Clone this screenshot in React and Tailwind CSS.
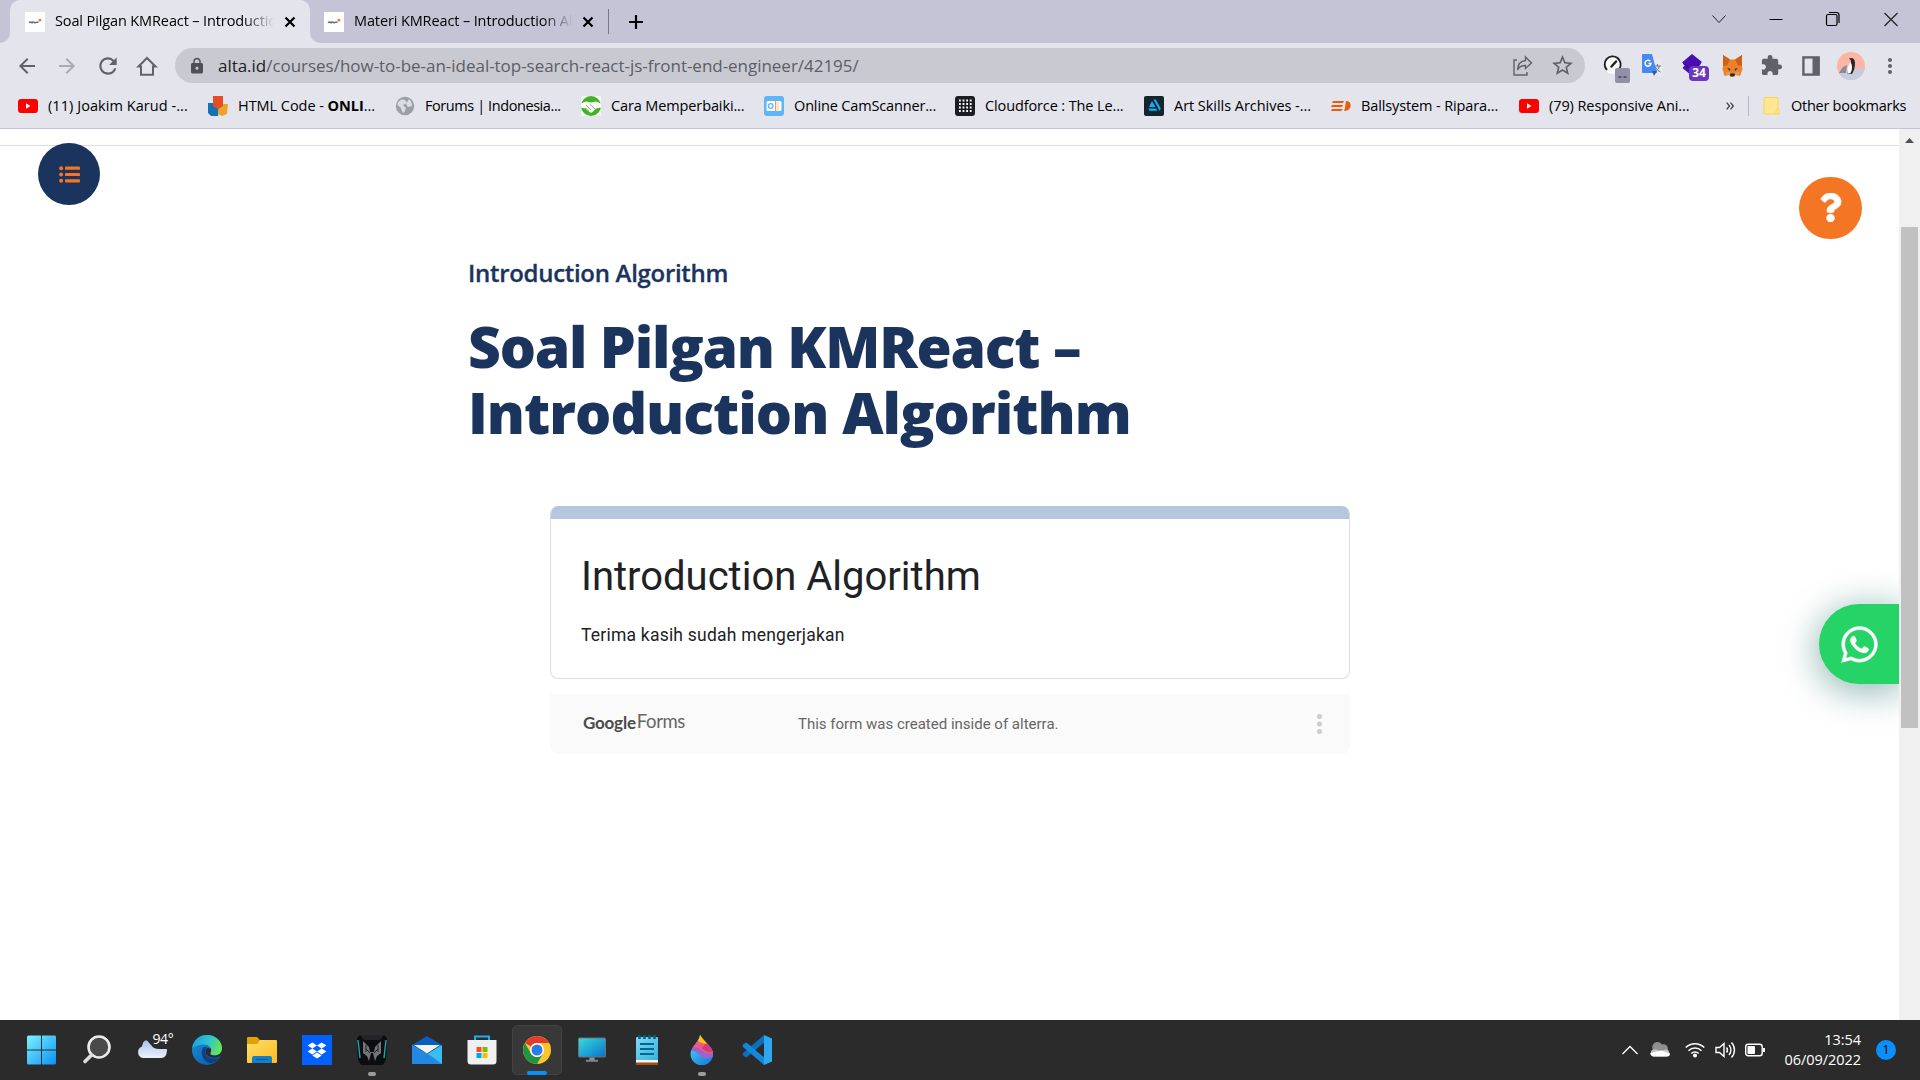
import React from "react";
import { FaQuestion, FaWhatsapp } from "react-icons/fa";
import { MdArrowBack, MdArrowForward, MdRefresh, MdLock, MdStarBorder, MdExtension, MdMoreVert } from "react-icons/md";

const CHROME_FONT = "font-['Open_Sans','Noto_Sans',sans-serif]";

function Favicon() {
  return (
    <svg className="h-5 w-5 shrink-0" viewBox="0 0 20 20">
      <rect width="20" height="20" fill="#fff" />
      <path d="M4 10.800c1.200-1.200 2.200-.7 3 0 .8-1.200 2-.7 3 0 1-.9 1.800-.6 3.500-.6" stroke="#5b6f90" strokeWidth="1.500" fill="none" />
      <circle cx="14.900" cy="8.200" r="1.400" fill="#f47523" />
    </svg>
  );
}

function CloseX({ className }) {
  return (
    <svg className={className} viewBox="0 0 12 12">
      <path d="M1.500 1.500l9 9M10.500 1.500l-9 9" stroke="#000" strokeWidth="2.200" />
    </svg>
  );
}

function TabTitle({ children }) {
  return (
    <span className="mb-[2px] ml-[10px] w-[219px] overflow-hidden whitespace-nowrap text-[14.5px] tracking-[-0.12px] [mask-image:linear-gradient(to_right,#000_86%,transparent)]">{children}</span>
  );
}

function TabStrip() {
  return (
    <div className="flex h-[43px] shrink-0 items-stretch bg-[#c4c4d6] text-black">
      <div className="w-[10px] bg-[#e3e4ec]"><div className="h-full rounded-br-[10px] bg-[#c4c4d6]" /></div>
      <div className="flex w-[300px] items-center rounded-t-[10px] bg-[#e3e4ec] pl-[15px]">
        <Favicon />
        <TabTitle>Soal Pilgan KMReact – Introduction Algorithm</TabTitle>
        <CloseX className="ml-[10px] h-3 w-3" />
      </div>
      <div className="flex flex-1 bg-[#e3e4ec]">
        <div className="flex flex-1 items-center rounded-bl-[10px] bg-[#c4c4d6] pl-[14px]">
          <Favicon />
          <TabTitle>Materi KMReact – Introduction Algorithm</TabTitle>
          <CloseX className="ml-[9px] h-3 w-3" />
          <div className="ml-[14px] h-[25px] w-px bg-[#77778a]" />
          <svg className="ml-[19px] h-4 w-4" viewBox="0 0 16 16"><path d="M8 1v14M1 8h14" stroke="#000" strokeWidth="2.200" /></svg>
          <svg className="mb-[6px] ml-auto h-4 w-4" viewBox="0 0 16 16"><path d="M1.500 4.500L8 11.500l6.500-7" stroke="#222" fill="none" /></svg>
          <svg className="mb-[6px] ml-[41px] h-4 w-4" viewBox="0 0 16 16"><path d="M1.500 8.500h13" stroke="#000" /></svg>
          <svg className="mb-[6px] ml-[41px] h-4 w-4" viewBox="0 0 16 16" fill="none" stroke="#000" strokeWidth="1.200"><rect x="1.500" y="3.500" width="10.500" height="11" rx="1.500" /><path d="M4 1.500h7.500a2.500 2.500 0 0 1 2.500 2.500v8" /></svg>
          <svg className="mb-[6px] ml-[42px] mr-[21px] h-4 w-4" viewBox="0 0 16 16"><path d="M1.500 2l13 13M14.500 2l-13 13" stroke="#222" strokeWidth="1.200" /></svg>
        </div>
      </div>
    </div>
  );
}

function Extensions() {
  return (
    <div className="flex h-9 items-center">
      <svg className="ml-[17px] h-9 w-[28px]" viewBox="0 0 28 36">
        <circle cx="10.500" cy="17" r="9" fill="#fafafa" />
        <path d="M5 22a8 8 0 1 1 12.500-1.500" fill="none" stroke="#202124" strokeWidth="1.900" />
        <path d="M9.500 18.500l4.500-5" stroke="#202124" strokeWidth="2.400" strokeLinecap="round" />
        <rect x="13" y="20" width="15" height="15" rx="2" fill="#9090a8" />
        <path d="M16.500 29h3M21.500 29h3" stroke="#222" strokeWidth="1.200" />
      </svg>
      <svg className="ml-[11px] h-6 w-[22px]" viewBox="0 0 22 24">
        <rect x="8" y="5" width="13" height="17" fill="#e8e9ec" />
        <path d="M13 12h7M16.500 10v2M18.500 12c-.8 3-3 5-5 6M14.500 13c1 2.500 3 4 5 5" stroke="#5b7897" fill="none" />
        <path d="M2 0h9l5 19H2a1 1 0 0 1-1-1V1a1 1 0 0 1 1-1z" fill="#4688f4" /><path d="M11 17h5l-3 5z" fill="#3850b5" />
        <path d="M9.300 7.200A3 3 0 1 0 10 9.500H7.500" fill="none" stroke="#fff" strokeWidth="1.500" />
      </svg>
      <div className="relative ml-[18px] h-9 w-[28px]">
        <svg className="h-9 w-7" viewBox="0 0 28 36"><path d="M11 6l10 8-3 3 3 3v2L11 28 1.500 20 4 17l-3-2.500z" fill="#4a0db3" /><path d="M2 15.500l9 6.500 9-6.500" fill="none" stroke="#35057f" /></svg>
        <span className="absolute right-0 top-[18px] flex h-[15px] w-[20px] items-center justify-center rounded-sm bg-[#6c36bd] text-[12px] font-bold leading-none text-white">34</span>
      </div>
      <svg className="ml-[13px] h-6 w-[21px]" viewBox="0 0 21 24">
        <path d="M1 1l7 4.500h5L20 1l-.5 9 1 5-2.500 7-5-1-2 2h-2l-2-2-4.500 1-2-7 1-5z" fill="#ee8127" />
        <path d="M1 1l7 4.500-3 6-4 .5zM20 1l-7 4.500 3 6 4 .5z" fill="#cd6116" />
        <path d="M5 14l3.500.7-.7 2.300zM16 14l-3.500.7.7 2.300z" fill="#263b4e" /><path d="M8.300 19.500h4.400v2.800H8.300z" fill="#282828" />
        <path d="M4 18.500l3.500-.5.5 2-3.500 1zM17 18.500l-3.500-.5-.5 2 3.500 1z" fill="#d9a27a" />
      </svg>
      <MdExtension className="ml-[17px] h-[23px] w-[23px] text-[#5f6368]" />
      <svg className="ml-[19px] h-[20px] w-[18px]" viewBox="0 0 18 20"><rect x="1.400" y="1.400" width="15.200" height="17.200" fill="none" stroke="#5f6368" strokeWidth="2.400" /><rect x="10.500" y="1" width="7" height="18" fill="#5f6368" /></svg>
      <svg className="ml-[17px] h-7 w-7" viewBox="0 0 28 28">
        <defs><clipPath id="avatar"><circle cx="14" cy="14" r="14" /></clipPath></defs>
        <g clipPath="url(#avatar)">
          <rect width="28" height="28" fill="#fdb5a6" />
          <path d="M0 22l8-2 12-3 8-1v12H0z" fill="#c3cddc" />
          <path d="M2 21c2-3 3-6 6-7l2-1-1 8z" fill="#8d8b93" />
          <path d="M12 6.500c3-1.500 6 0 6 4.500 0 4-1 8-3 11l-5-1c0-5 4-8 4-12.500z" fill="#29272b" />
          <path d="M13.500 10c-2 3-4 7-3 11h3c2-3 2-8 0-11z" fill="#fff" />
        </g>
      </svg>
      <MdMoreVert className="ml-[13px] mr-[14px] h-6 w-6 text-[#5f6368]" />
    </div>
  );
}

function Toolbar() {
  return (
    <div className="flex h-[45px] shrink-0 items-center text-[#5f6368]">
      <MdArrowBack className="ml-[15px] h-6 w-6" />
      <MdArrowForward className="ml-[16px] h-6 w-6 text-[#a9aab2]" />
      <MdRefresh className="ml-[16px] h-[26px] w-[26px]" />
      <svg className="ml-[14px] h-6 w-6" viewBox="0 0 24 24"><path d="M3.500 12.500L12 4l8.500 8.500H18v8.300H6v-8.300z" fill="none" stroke="#5f6368" strokeWidth="2" /></svg>
      <div className="ml-[16px] flex h-[35px] w-[1410px] items-center rounded-full bg-[#c9c9d1] pl-[13px]">
        <MdLock className="h-[18px] w-[18px] text-[#4d5056]" />
        <span className="ml-[12px] text-[17px] tracking-[-0.03px] text-[#5c5e66]"><span className="text-[#202124]">alta.id</span>/courses/how-to-be-an-ideal-top-search-react-js-front-end-engineer/42195/</span>
        <svg className="ml-auto h-[22px] w-[20px]" viewBox="0 0 20 22" fill="none" stroke="#5f6368" strokeWidth="1.400"><path d="M4 5H1v15h13v-3" /><path d="M12.500 2l6 6-6 5.500V10.500c-4 0-6.500 1.500-8 4.500.3-5 3-9 8-9.500z" /></svg>
        <MdStarBorder className="ml-[17px] mr-[10px] h-[25px] w-[25px]" />
      </div>
      <Extensions />
    </div>
  );
}

const YoutubeIcon = () => (
  <svg className="h-5 w-5 shrink-0" viewBox="0 0 20 20"><rect y="3" width="20" height="14" rx="3" fill="#f00" /><path d="M8 7.200v5.600l4.500-2.800z" fill="#fff" /></svg>
);

const bookmarks = [
  { label: "(11) Joakim Karud -...", w: "w-[190px] tracking-[0.06px]", icon: <YoutubeIcon /> },
  { label: <>HTML Code - <b>ONLI</b>...</>, w: "w-[187px] tracking-[-0.05px]", icon: <svg className="h-5 w-5" viewBox="0 0 20 20"><path d="M0 7h9l2 4-1 9H3l-3-3z" fill="#1572b6" /><path d="M11 8h9l-1 10-5 2-4-2z" fill="#eba328" /><path d="M5 0h10v10l-5 3-5-3z" fill="#e44d26" /></svg> },
  { label: "Forums | Indonesia...", w: "w-[186px] tracking-[-0.42px]", icon: <svg className="h-5 w-5" viewBox="0 0 20 20"><circle cx="10" cy="10" r="9.200" fill="#9aa0a6" /><path d="M3 6c3-3 5-3 7-2l2 3-4 2 3 3-2 5c-3-1-2-5-4-6s-3-2-2-5zM14 3c2 2 3 4 3 7l-4 1-2-3z" fill="#dcdde4" /></svg> },
  { label: "Cara Memperbaiki...", w: "w-[183px] tracking-[-0.12px]", icon: <svg className="h-5 w-5" viewBox="0 0 20 20"><rect width="20" height="20" fill="#f4f8f2" /><circle cx="10" cy="10" r="10" fill="#43b02a" /><path d="M0 7.500l5-2 5 1 5-1 5 2v4l-5 1-4 4h-2l-5-4-4-1z" fill="#fff" /><path d="M5 9l5 5M8.500 8l5.500 5M4 12l4 3" stroke="#43b02a" strokeWidth=".8" /></svg> },
  { label: "Online CamScanner...", w: "w-[191px] tracking-[-0.15px]", icon: <svg className="h-5 w-5" viewBox="0 0 20 20"><rect width="20" height="20" rx="3" fill="#5eb5f7" /><rect x="2.500" y="5" width="15" height="10" rx="1.500" fill="#fff" /><circle cx="6.700" cy="10" r="2.300" fill="none" stroke="#5eb5f7" strokeWidth="1.300" /><path d="M11.500 5v10" stroke="#f88" /><path d="M13.700 5v10" stroke="#ffe9b8" strokeWidth="3" /></svg> },
  { label: "Cloudforce : The Le...", w: "w-[189px] tracking-[-0.12px]", icon: <svg className="h-5 w-5" viewBox="0 0 20 20"><rect width="20" height="20" rx="3" fill="#1c1d24" /><path d="M4 4.500h13M4 8h13M4 11.500h13M4 15h13" stroke="#fff" strokeWidth="1.800" strokeDasharray="1.800 1.800" /></svg> },
  { label: "Art Skills Archives -...", w: "w-[187px] tracking-[-0.04px]", icon: <svg className="h-5 w-5" viewBox="0 0 20 20"><rect width="20" height="20" rx="2" fill="#142530" /><path d="M8 5l3.500 6H5zM4.200 12.500h8l1.200 2.200H5.500zM9.500 3.500h2.300l5 9-1.200 2.200z" fill="#13aff0" /></svg> },
  { label: "Ballsystem - Ripara...", w: "w-[188px] tracking-[-0.12px]", icon: <svg className="h-5 w-5" viewBox="0 0 20 20" fill="#ea5b0c"><path d="M2 5h11l-1 2H1zM1 9h11l-1 2H0zM1 13h11l-2 2H0zM15 5c7 0 6 10-2 10l1-3z" /></svg> },
  { label: "(79) Responsive Ani...", w: "w-[204px] tracking-[-0.08px]", icon: <YoutubeIcon /> },
];

function BookmarksBar() {
  return (
    <div className="flex h-[41px] shrink-0 items-center border-b border-[#c4c4d2] pb-[4px] pl-[18px] text-[14.5px] text-black">
      {bookmarks.map((b, i) => (
        <div key={i} className={"flex shrink-0 items-center gap-[10px] whitespace-nowrap " + b.w}>
          {b.icon}<span>{b.label}</span>
        </div>
      ))}
      <svg className="ml-[3px] h-2 w-2" viewBox="0 0 8 8"><path d="M.7.700L3.500 4 .7 7.300M4.500.700L7.300 4 4.500 7.300" fill="none" stroke="#444" strokeWidth="1.300" /></svg>
      <div className="ml-[14px] h-5 w-px bg-[#b5b5c6]" />
      <svg className="ml-[14px] h-5 w-[17px]" viewBox="0 0 17 20"><path d="M2 1.500h12a1 1 0 0 1 1 1V13l1 1.500V18H2a1 1 0 0 1-1-1V2.500a1 1 0 0 1 1-1z" fill="#ffe68f" stroke="#fcd456" /><path d="M15 13l-2 1.500V18" stroke="#fcd456" fill="none" /></svg>
      <span className="ml-[11px] whitespace-nowrap tracking-[-0.26px]">Other bookmarks</span>
    </div>
  );
}

function FormEmbed() {
  return (
    <div className="ml-[550px] w-[800px] font-['Roboto',sans-serif]">
      <div className="h-[173px] overflow-hidden rounded-lg border border-t-0 border-[#dadce0]">
        <div className="-mx-px h-[13px] bg-[#b6c6dd]" />
        <div className="px-[30px] pt-[30px]">
          <h2 className="text-[40px] leading-[56px] text-[#202124]">Introduction Algorithm</h2>
          <p className="mt-[18px] text-[17.5px] leading-6 tracking-[0.22px] text-[#202124]">Terima kasih sudah mengerjakan</p>
        </div>
      </div>
      <div className="mt-[15px] flex h-[60px] items-center rounded-b-lg bg-[#fafafa] pl-[33px] pr-[28px]">
        <div className="mb-[3px] flex w-[215px] items-baseline font-['Lato',sans-serif] text-[17px] text-[#4a4a4a]">
          <span className="font-bold tracking-[-0.2px]">Google</span>
          <span className="relative -top-px ml-px text-[18.5px] tracking-[-0.4px] text-[#666]">Forms</span>
        </div>
        <span className="text-[15px] text-[#666]">This form was created inside of alterra.</span>
        <svg className="ml-auto h-5 w-[5px]" viewBox="0 0 5 20" fill="#ccc"><circle cx="2.500" cy="2.500" r="2.500" /><circle cx="2.500" cy="10" r="2.500" /><circle cx="2.500" cy="17.500" r="2.500" /></svg>
      </div>
    </div>
  );
}

function Page() {
  return (
    <div className="relative flex min-h-0 flex-1 bg-white">
      <main className="relative min-w-0 flex-1 overflow-hidden pt-4">
        <hr className="border-[#dcdcdc]" />
        <h3 className="ml-[468px] mt-[111px] text-2xl font-semibold leading-8 tracking-[-0.3px] text-[#1a345e] [-webkit-text-stroke:0.3px_#1a345e]">Introduction Algorithm</h3>
        <h1 className="ml-[468px] mt-[24px] w-[760px] text-[57px] font-extrabold leading-[66px] text-[#1a345e]">
          <span className="block tracking-[-1.22px]">Soal Pilgan KMReact –</span>
          <span className="block tracking-[-0.98px]">Introduction Algorithm</span>
        </h1>
        <div className="mt-[61px]"><FormEmbed /></div>
        <button className="absolute left-[38px] top-[14px] flex h-[62px] w-[62px] items-center justify-center rounded-full bg-[#1a345e] text-[#f47523]">
          <svg className="h-[17px] w-[21px]" viewBox="0 0 21 17" fill="currentColor"><circle cx="2.100" cy="2.200" r="2" /><circle cx="2.100" cy="8.500" r="2" /><circle cx="2.100" cy="14.800" r="2" /><rect x="6" y=".6" width="15" height="3.200" rx=".9" /><rect x="6" y="6.900" width="15" height="3.200" rx=".9" /><rect x="6" y="13.200" width="15" height="3.200" rx=".9" /></svg>
        </button>
        <button className="absolute left-[1799px] top-[48px] flex h-[62px] w-[63px] items-center justify-center rounded-full bg-[#f47523] pb-[2px] text-white"><FaQuestion className="h-[29px] w-[29px] stroke-current [stroke-width:14px]" /></button>
        <button className="absolute right-0 top-[475px] flex h-20 w-20 items-center justify-center rounded-l-[40px] bg-[#25d366] text-white shadow-[0_6px_34px_4px_rgba(7,94,84,0.4)]"><FaWhatsapp className="h-[41px] w-[41px] stroke-current [stroke-width:6px]" /></button>
      </main>
      <div className="flex w-[21px] flex-col items-center bg-[#f0f0f0]">
        <svg className="mt-[9px] h-[5px] w-[9px]" viewBox="0 0 9 5"><path d="M0 5L4.500 0 9 5z" fill="#505050" /></svg>
        <div className="mt-[84px] h-[501px] w-[17px] bg-[#c1c1c1]" />
      </div>
    </div>
  );
}

const apps = [
  { name: "start", svg: <svg viewBox="0 0 30 30"><defs><linearGradient id="win" x1="0" y1="0" x2="1" y2="1"><stop stopColor="#7df3ff" /><stop offset="1" stopColor="#0a90f5" /></linearGradient></defs><path d="M1.500 .5h12.500V14.500H0V2A1.500 1.500 0 0 1 1.500 .5zM15 .5H28A1.500 1.500 0 0 1 29 2v12.500h-14zM0 15.500h14v14H1.500A1.500 1.500 0 0 1 0 28zM15 15.500h14V28a1.500 1.500 0 0 1-1.500 1.500H15z" fill="url(#win)" /></svg> },
  { name: "search", svg: <svg viewBox="0 0 30 30"><circle cx="17" cy="12" r="10.500" fill="#4a4a4a" stroke="#ececec" strokeWidth="2.600" /><path d="M9.500 20L3 26.500" stroke="#dedede" strokeWidth="3.600" strokeLinecap="round" /></svg> },
  { name: "weather", svg: null },
  { name: "edge", svg: <svg viewBox="0 0 30 30"><defs><linearGradient id="eTop" x1="0" y1="0.300" x2="1" y2="0.600"><stop stopColor="#1a9fe0" /><stop offset=".5" stopColor="#2fc4cf" /><stop offset="1" stopColor="#6ae84d" /></linearGradient><linearGradient id="eLow" x1="0" y1="0" x2="1" y2="1"><stop stopColor="#1a94dc" /><stop offset="1" stopColor="#0b50a0" /></linearGradient></defs><circle cx="15" cy="15" r="15" fill="url(#eLow)" /><path d="M.2 13C1.500 4 8 0 15 0c9 0 15 6.500 15 13 0 5-3.500 7.500-7.500 7.500-3 0-5-1.300-4-3 2-3-.5-8-6.500-8C6 9.500 1.500 12 .2 13z" fill="url(#eTop)" /><path d="M12 12c-4 3-3 12 4 15.500 5 1.500 9-1 12-5-6 2.500-13 1-14.500-4-.7-2.500 0-5 1.500-6.500z" fill="#10407f" /><path d="M15 13c-2 2-2 6 1 8 4 2.500 9 2 12.500 0-1 2-1.500 2.500-1.500 2.500 1-1 3-3.500 3-8-1 3-4 5-7.500 5-3 0-5-1.300-4-3 .7-1 .7-2.500.3-4z" fill="#2b2b2b" /></svg> },
  { name: "files", svg: <svg viewBox="0 0 30 30"><defs><linearGradient id="fold" x1="0" y1="0" x2="1" y2="1"><stop stopColor="#ffdf66" /><stop offset="1" stopColor="#fdbb22" /></linearGradient></defs><path d="M0 3a1 1 0 0 1 1-1h9l3 3h5v5H0z" fill="#dfa106" /><path d="M0 9h10l3-4h16a1 1 0 0 1 1 1v21a1 1 0 0 1-1 1H1a1 1 0 0 1-1-1z" fill="url(#fold)" /><path d="M5 28v-5a2 2 0 0 1 2-2h16a2 2 0 0 1 2 2v5z" fill="#1380cc" /><path d="M9 24.500h12" stroke="#075a9a" /></svg> },
  { name: "dropbox", svg: <svg viewBox="0 0 30 30"><rect width="30" height="30" fill="#0061fe" /><path d="M10.300 7.500l4.700 3-4.700 3-4.700-3zM19.700 7.500l4.700 3-4.700 3-4.700-3zM10.300 13.500l4.700 3-4.700 3-4.700-3zM19.700 13.500l4.700 3-4.700 3-4.700-3zM15 17.500l4.700 3-4.700 3-4.700-3z" fill="#fff" /></svg> },
  { name: "predator", running: true, svg: <svg viewBox="0 0 30 30"><path d="M3 0h24l3 3-1 22-3 5H4l-3-5L0 3z" fill="#0c0d0f" /><path d="M3 0h24l-4 5H7z" fill="#222427" /><path d="M1 5l2 18M29 5l-2 18" stroke="#1aa6b8" strokeWidth="1.400" /><path d="M6 6l6 6 1 5h4l1-5 6-6v12l-4 3-2 5-2-8h-2l-2 8-2-5-4-3z" fill="#737578" /><path d="M9 14l4 4M21 14l-4 4M9 10v7M21 10v7" stroke="#222" /></svg> },
  { name: "mail", svg: <svg viewBox="0 0 30 30"><path d="M0 10L15 1l15 9v4H0z" fill="#0a5db8" /><path d="M0 10l15 9 15-9v19H0z" fill="#3cbcf5" /><path d="M0 10l19 11 11 8H0z" fill="#2389e0" /><path d="M2 10h26L15 18.500z" fill="#f2f3f4" /></svg> },
  { name: "store", svg: <svg viewBox="0 0 30 30"><path d="M8 7V1.500h14V7" fill="none" stroke="#1bb0ee" strokeWidth="2" /><path d="M.5 5h29v21a3.500 3.500 0 0 1-3.500 3.500H4A3.500 3.500 0 0 1 .5 26z" fill="#f0f0f0" /><path d="M9.500 12h5v5h-5z" fill="#f25022" /><path d="M15.500 12h5v5h-5z" fill="#7fba00" /><path d="M9.500 18h5v5h-5z" fill="#00a4ef" /><path d="M15.500 18h5v5h-5z" fill="#ffb900" /></svg> },
  { name: "chrome", active: true, svg: <svg viewBox="0 0 30 30"><circle cx="15" cy="15" r="14" fill="#fcc52b" /><path d="M2.900 8A14 14 0 0 1 27.100 8H15a7 7 0 0 0-6 3.500z" fill="#e33b2e" /><path d="M2.900 8A14 14 0 0 0 15 29l6-10.500a7 7 0 0 1-12 0z" fill="#229342" /><circle cx="15" cy="15" r="7" fill="#fff" /><circle cx="15" cy="15" r="5.500" fill="#2a7bec" /></svg> },
  { name: "monitor", svg: <svg viewBox="0 0 30 30"><defs><linearGradient id="mon" x1="0" y1="0" x2="1" y2="1"><stop stopColor="#36dcdd" /><stop offset="1" stopColor="#0b72c9" /></linearGradient></defs><rect x="1.500" y="3" width="27" height="19" rx="1" fill="url(#mon)" stroke="#68727b" /><path d="M12.500 22.500h5V25h-5z" fill="#8c979e" /><path d="M9 25.800h12" stroke="#7c868d" strokeWidth="2" /></svg> },
  { name: "notepad", svg: <svg viewBox="0 0 30 30"><defs><linearGradient id="note" x1="0" y1="0" x2="1" y2="1"><stop stopColor="#7fdaf5" /><stop offset="1" stopColor="#37b3dc" /></linearGradient></defs><path d="M4 24h22v6H4z" fill="#a34f12" /><path d="M4 22h22v5.500H4z" fill="#f4f4f4" /><path d="M5 2h20a1 1 0 0 1 1 1v22H4V3a1 1 0 0 1 1-1z" fill="url(#note)" /><path d="M8 9h14M8 14h14M8 19h14" stroke="#04678f" strokeWidth="2" /><path d="M7.500 0v4M12.500 0v4M17.500 0v4M22.500 0v4" stroke="#0a5f80" strokeWidth="2.600" /></svg> },
  { name: "paint", running: true, svg: <svg viewBox="0 0 30 30"><defs><clipPath id="drop"><path d="M13 0c0 6-9.500 12-9.500 19a11.300 11.300 0 0 0 22.600 0C26.100 12 17 7 13 0z" /></clipPath><linearGradient id="sea" x1="0" y1="0" x2="1" y2="1"><stop stopColor="#5fe0ff" /><stop offset="1" stopColor="#0a6fd0" /></linearGradient></defs><g clipPath="url(#drop)"><rect width="30" height="30" fill="url(#sea)" /><path d="M2 17c4-3 7 0 11 3 4 4 8 4 14 1V8L6 9z" fill="#9a63d2" /><path d="M5 12c6 0 9 3 12 5 3 2 6 2 10 0V0H8z" fill="#ef5a85" /><path d="M15 13c3 4 7 5 11 3l1-4-8-4z" fill="#d43a78" /><path d="M10 5c3 2 6 5 11 3L14 0h-3z" fill="#fdc60b" /></g></svg> },
  { name: "vscode", svg: <svg viewBox="0 0 30 30"><path d="M22 0v8L4.500 22.500l-3-1.500-1-2.500z" fill="#0a70bd" /><path d="M22 30v-8L4.500 7.500l-3 1.500-1 2.500z" fill="#1288d8" /><path d="M22 0l8 3.500v23L22 30z" fill="#2fa7f0" /><path d="M22 8v14l-8.500-7z" fill="#2b2b2b" /></svg> },
];

function Taskbar() {
  return (
    <div className="flex h-[60px] shrink-0 items-center bg-[#2b2b2b] pl-[14px] text-white">
      {apps.map((a) => (
        <div key={a.name} className="flex h-[60px] w-[55px] shrink-0 items-center justify-center">
          <div className={"relative flex h-[50px] w-[50px] items-center justify-center rounded-[5px] " + (a.active ? "border border-[#434343] bg-[#383838]" : "")}>
            {a.svg ? (
              <div className="h-[30px] w-[30px]">{a.svg}</div>
            ) : (
              <>
                <svg className="h-[30px] w-[30px]" viewBox="0 0 30 30"><defs><linearGradient id="cl" x1="0" y1="0" x2="0" y2="1"><stop stopColor="#a9c3f2" /><stop offset="1" stopColor="#eef1f8" /></linearGradient></defs><path d="M6 23a6 6 0 0 1-1-11.500C6 6 8 5 10 5.500L14 10c2 3 5 4 8 4h8c0 6-2 9-6 9z" fill="url(#cl)" /></svg>
                <span className="absolute right-[3px] top-[6px] text-[14px] leading-4 tracking-[-0.3px]">94°</span>
              </>
            )}
            {a.running && <span className="absolute -bottom-px h-1 w-2 rounded-full bg-[#9c9c9c]" />}
            {a.active && <span className="absolute -bottom-px h-1 w-5 rounded-full bg-[#0a90fb]" />}
          </div>
        </div>
      ))}
      <svg className="ml-auto h-4 w-4" viewBox="0 0 16 16"><path d="M.5 12L8 4.500l7.500 7.500" fill="none" stroke="#fff" strokeWidth="1.300" /></svg>
      <svg className="ml-[12px] h-5 w-5" viewBox="0 0 20 20"><path d="M3 10a5 5 0 0 1 9-5.500c3-1 6 1 6 4.500l-7 3z" fill="#8f8f8f" /><path d="M3 16.500a4 4 0 0 1-1-6.500c3-2 6 0 8 1l7-2c3 2 3 7 0 7.500z" fill="#c4c4c4" /><path d="M3 16.500c-2-1-3-2-2.500-3.500L11 10.500l9 3c0 2-1 3-3 3z" fill="#fff" /></svg>
      <svg className="ml-[15px] h-5 w-5" viewBox="0 0 20 20" fill="none" stroke="#fff" strokeWidth="1.500"><path d="M.7 7.500a13.300 13.300 0 0 1 18.600 0M3.500 10.700a9.300 9.300 0 0 1 13 0M6.300 13.500a5.300 5.300 0 0 1 7.400 0" /><circle cx="10" cy="15.500" r="1.300" fill="#fff" /></svg>
      <svg className="ml-[10px] h-5 w-[21px]" viewBox="0 0 21 20" fill="none" stroke="#fff" strokeWidth="1.400"><path d="M1 7.500h3.500L9 3.500v13l-4.500-4H1z" /><path d="M11.500 7.500a4 4 0 0 1 0 5M14 5a7.500 7.500 0 0 1 0 10M16.500 2.500a11 11 0 0 1 0 15" /></svg>
      <svg className="ml-[9px] h-5 w-5" viewBox="0 0 20 20"><rect x=".7" y="4.200" width="16.500" height="11.600" rx="2.500" fill="none" stroke="#fff" strokeWidth="1.400" /><rect x="2.500" y="6" width="7.500" height="8" rx="1" fill="#fff" /><path d="M18 8h2v4h-2z" fill="#fff" /></svg>
      <div className="ml-[19px] flex w-[77px] flex-col items-end text-[14.5px] leading-5 tracking-[-0.05px]"><span>13:54</span><span>06/09/2022</span></div>
      <span className="ml-[15px] mr-[24px] flex h-5 w-5 items-center justify-center rounded-full bg-[#0a90fb] text-[13px] text-black">1</span>
    </div>
  );
}

export default function App() {
  return (
    <div className={"flex h-[1080px] w-[1920px] flex-col overflow-hidden bg-[#e3e4ec] " + CHROME_FONT}>
      <TabStrip />
      <Toolbar />
      <BookmarksBar />
      <Page />
      <Taskbar />
    </div>
  );
}
